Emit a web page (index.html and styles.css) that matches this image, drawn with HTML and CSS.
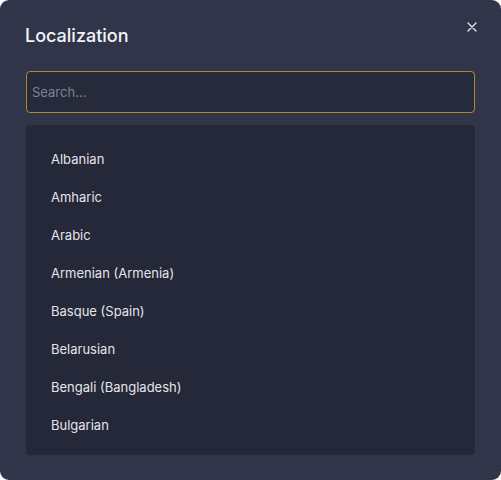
FILE: index.html
```html
<!DOCTYPE html>
<html>
<head>
<meta charset="utf-8">
<link rel="stylesheet" href="styles.css">
</head>
<body>
<div class="modal">
  <div class="header">
    <h2 class="title">Localization</h2>
    <button class="close" aria-label="Close">
      <svg width="10" height="10" viewBox="0 0 10 10"><path d="M1 1L9 9M9 1L1 9" stroke="#e8e9ee" stroke-width="1.3" stroke-linecap="round"/></svg>
    </button>
  </div>
  <input class="search" type="text" placeholder="Search...">
  <ul class="list">
    <li>Albanian</li>
    <li>Amharic</li>
    <li>Arabic</li>
    <li>Armenian (Armenia)</li>
    <li>Basque (Spain)</li>
    <li>Belarusian</li>
    <li>Bengali (Bangladesh)</li>
    <li>Bulgarian</li>
  </ul>
</div>
</body>
</html>
```
FILE: styles.css
```css
html, body { margin: 0; padding: 0; background: #ffffff; }
body { font-family: Inter, "Noto Sans", sans-serif; }
.modal {
  box-sizing: border-box;
  width: 501px;
  height: 480px;
  background: #31354a;
  border-radius: 9px;
  padding: 24px 26px 25px 26px;
  display: flex;
  flex-direction: column;
}
.header {
  display: flex;
  justify-content: space-between;
  align-items: flex-start;
  height: 47px;
}
.title {
  margin: 0;
  margin-left: -1px;
  font-size: 18px;
  font-weight: 500;
  color: #f3f4f7;
  line-height: 24px;
}
.close {
  background: none;
  border: 0;
  padding: 0;
  margin-top: -4px;
  margin-right: -4px;
  width: 14px;
  height: 14px;
  display: flex;
  align-items: center;
  justify-content: center;
}
.search {
  box-sizing: border-box;
  height: 42px;
  width: 100%;
  background: #262a3b;
  border: 1px solid #b3852e;
  border-radius: 4px;
  padding: 0 5px;
  font-family: inherit;
  font-size: 13px;
  color: #e6e7ec;
  outline: none;
}
.search::placeholder { color: #7d8192; }
.list {
  list-style: none;
  margin: 12px 0 0 0;
  padding: 15px 0 11px 0;
  background: #252838;
  border-radius: 4px;
  flex: 1;
}
.list li {
  height: 38px;
  line-height: 38px;
  padding-left: 25px;
  font-size: 13px;
  color: #e4e5ea;
}
```
